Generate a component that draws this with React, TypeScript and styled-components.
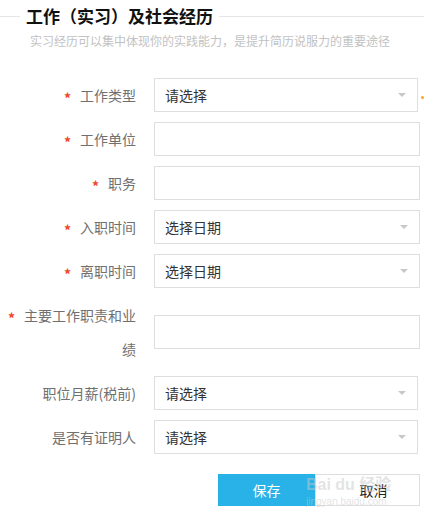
import React from "react";
import styled, { createGlobalStyle } from "styled-components";

const GlobalStyle = createGlobalStyle`
  html, body {
    margin: 0;
    padding: 0;
    background: #fff;
  }
  body {
    font-family: "Noto Sans CJK SC", "Noto Sans", "Liberation Sans", sans-serif;
  }
  * {
    box-sizing: border-box;
  }
`;

interface Field {
  label: string;
  required?: boolean;
  kind: "select" | "input" | "date";
  placeholder?: string;
  mark?: boolean;
}

const fields: Field[] = [
  { label: "工作类型", required: true, kind: "select", placeholder: "请选择", mark: true },
  { label: "工作单位", required: true, kind: "input" },
  { label: "职务", required: true, kind: "input" },
  { label: "入职时间", required: true, kind: "date", placeholder: "选择日期" },
  { label: "离职时间", required: true, kind: "date", placeholder: "选择日期" },
  { label: "主要工作职责和业绩", required: true, kind: "input" },
  { label: "职位月薪(税前)", kind: "select", placeholder: "请选择" },
  { label: "是否有证明人", kind: "select", placeholder: "请选择" },
];

const App: React.FC = () => {
  return (
    <Page>
      <GlobalStyle />
      <Header>
        <Rule $short />
        <Title>工作（实习）及社会经历</Title>
        <Rule />
      </Header>
      <SubTitle>实习经历可以集中体现你的实践能力，是提升简历说服力的重要途径</SubTitle>

      <Form>
        {fields.map((f) => (
          <Row key={f.label}>
            <Label>
              {f.required && <Star>*</Star>}
              {f.label}
            </Label>
            <FieldCell>
              {f.kind === "input" ? (
                <TextInput />
              ) : (
                <FakeSelect $wide={f.kind === "date"}>
                  <span>{f.placeholder}</span>
                  <Arrow />
                </FakeSelect>
              )}
              {f.mark && <Mark />}
            </FieldCell>
          </Row>
        ))}
      </Form>

      <Actions>
        <SaveButton>保存</SaveButton>
        <CancelButton>取消</CancelButton>
        <Watermark aria-hidden>
          <WmBrand>Bai du 经验</WmBrand>
          <WmUrl>jingyan.baidu.com</WmUrl>
        </Watermark>
      </Actions>
    </Page>
  );
};

export default App;

const Page = styled.div`
  width: 424px;
  height: 516px;
  overflow: hidden;
`;

const Header = styled.div`
  display: flex;
  align-items: center;
  height: 32px;
`;

const Rule = styled.div<{ $short?: boolean }>`
  height: 1px;
  background: #e6e6e6;
  flex: ${(p) => (p.$short ? "0 0 20px" : "1")};
`;

const Title = styled.h2`
  margin: 0;
  padding: 0 6px;
  font-size: 17px;
  font-weight: bold;
  color: #111;
  line-height: 32px;
`;

const SubTitle = styled.div`
  margin-left: 30px;
  font-size: 12px;
  line-height: 18px;
  color: #c2c2c2;
`;

const Form = styled.div`
  margin-top: 28px;
  display: flex;
  flex-direction: column;
  gap: 10px;
`;

const Row = styled.div`
  display: grid;
  grid-template-columns: 136px auto;
  column-gap: 18px;
  align-items: center;
`;

const Label = styled.div`
  text-align: right;
  font-size: 14px;
  line-height: 34px;
  color: #707070;
`;

const Star = styled.span`
  display: inline-block;
  width: 6px;
  margin-right: 10px;
  color: #f0452b;
  font-weight: bold;
  font-size: 14px;
  position: relative;
  top: 3px;
`;

const FieldCell = styled.div`
  display: flex;
  align-items: center;
`;

const TextInput = styled.input`
  width: 266px;
  height: 34px;
  border: 1px solid #dedede;
  outline: none;
  padding: 0 10px;
  font-size: 14px;
`;

const FakeSelect = styled.div<{ $wide?: boolean }>`
  width: ${(p) => (p.$wide ? 266 : 264)}px;
  height: 34px;
  border: 1px solid #dedede;
  display: flex;
  align-items: center;
  justify-content: space-between;
  padding: 0 11px 0 10px;
  font-size: 14px;
  color: #333;
`;

const Arrow = styled.i`
  width: 0;
  height: 0;
  border-left: 4px solid transparent;
  border-right: 4px solid transparent;
  border-top: 4px solid #c8c8c8;
`;

const Mark = styled.i`
  width: 3px;
  height: 3px;
  margin-left: 3px;
  margin-top: 4px;
  border-radius: 50%;
  background: #f5a623;
`;

const Actions = styled.div`
  position: relative;
  margin-top: 20px;
  display: flex;
  justify-content: flex-end;
  padding-right: 4px;
`;

const SaveButton = styled.button`
  width: 97px;
  height: 32px;
  border: none;
  background: #29b2e8;
  color: #fff;
  font-size: 14px;
  font-family: inherit;
`;

const CancelButton = styled.button`
  width: 105px;
  height: 32px;
  border: 1px solid #dedede;
  background: #fff;
  color: #222;
  font-size: 14px;
  font-family: inherit;
  padding: 0 0 0 12px;
`;

const Watermark = styled.div`
  position: absolute;
  left: 306px;
  top: 3px;
  pointer-events: none;
  color: rgba(200, 200, 200, 0.5);
  font-family: "Liberation Sans", "Noto Sans CJK SC", sans-serif;
  line-height: 1;
`;

const WmBrand = styled.div`
  font-size: 16px;
  font-weight: bold;
`;

const WmUrl = styled.div`
  font-size: 10px;
  margin-top: 4px;
`;
